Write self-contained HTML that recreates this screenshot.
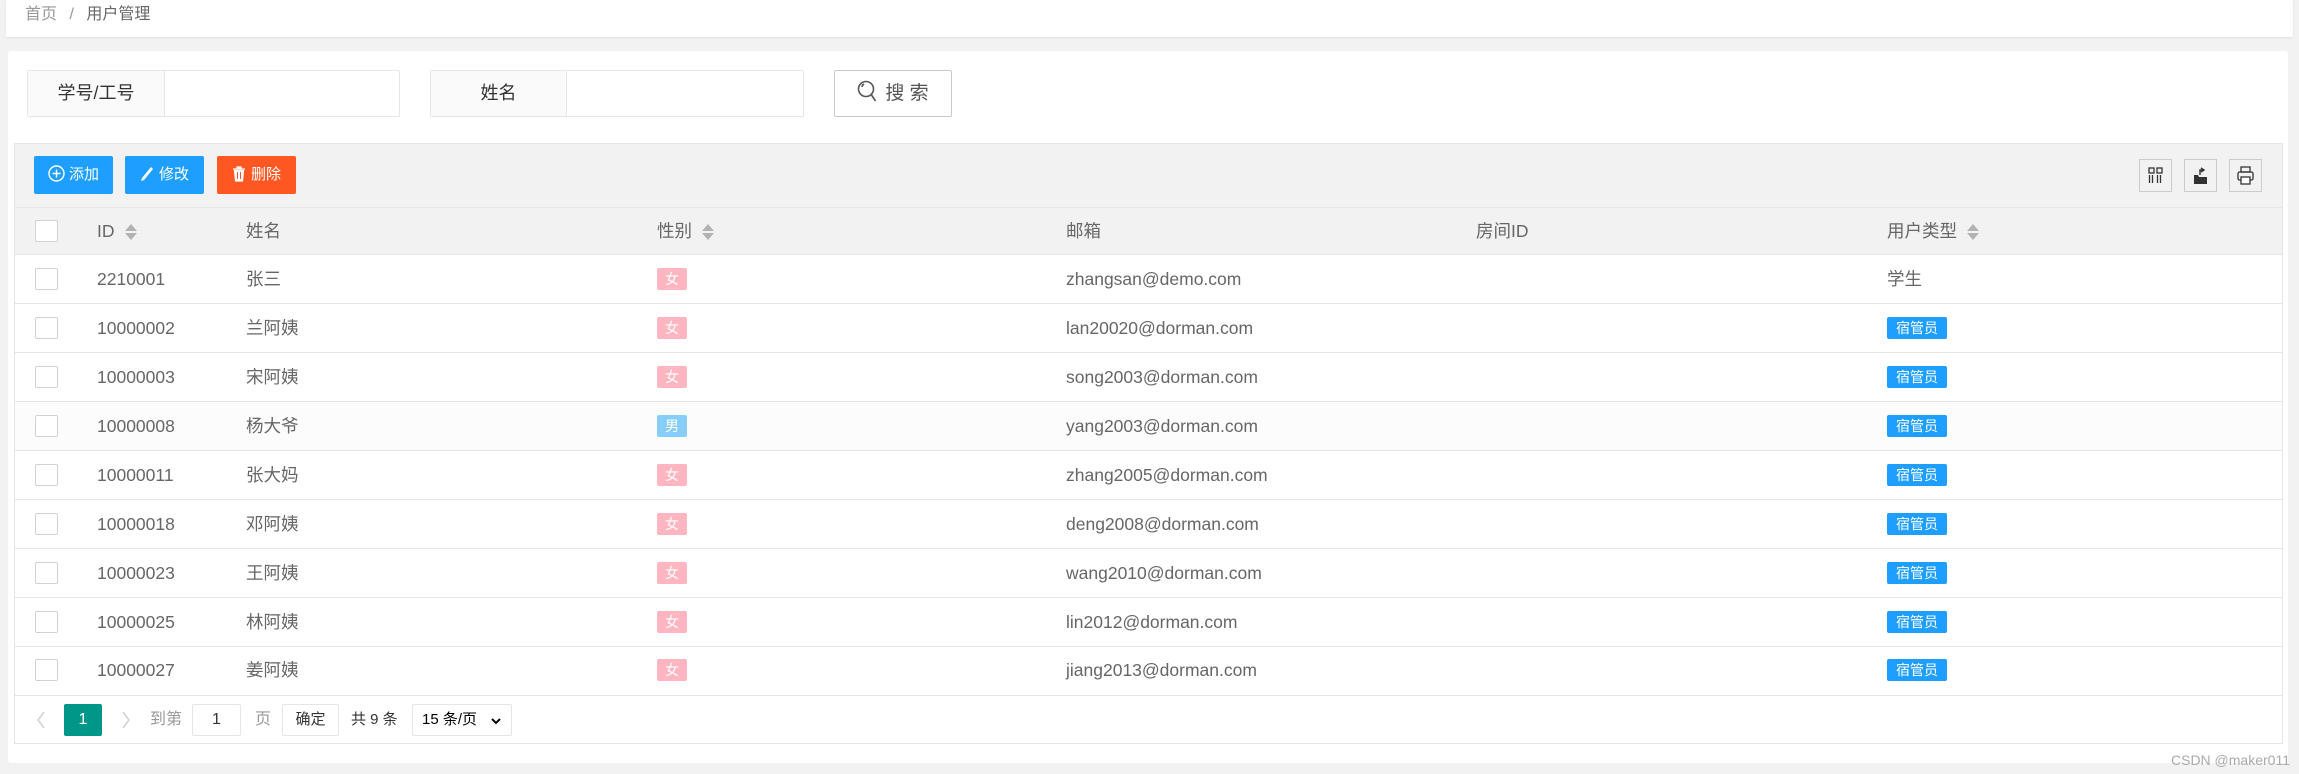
<!DOCTYPE html>
<html><head><meta charset="utf-8"><style>
*{box-sizing:border-box;margin:0;padding:0}
body{width:2299px;height:774px;background:#f2f2f2;font-family:"Liberation Sans","Noto Sans CJK SC",sans-serif;position:relative;overflow:hidden;color:#666}
.a{position:absolute}
.bc{left:6px;top:0;width:2287px;height:37px;background:#fff;box-shadow:0 1px 2px rgba(0,0,0,.08);font-size:16px;line-height:30px;padding-left:19px;color:#999}
.card{left:8px;top:51px;width:2280px;height:712px;background:#fff;border-radius:3px}
.grp{top:70px;height:47px;border:1px solid #e6e6e6;background:#fff;border-radius:2px}
.lbl{position:absolute;left:0;top:0;bottom:0;background:#fafafa;border-right:1px solid #e6e6e6;color:#333;font-size:18px;line-height:45px;text-align:center}
.sbtn{left:834px;top:70px;width:118px;height:47px;border:1px solid #c9c9c9;border-radius:2px;color:#555;font-size:19px;line-height:45px;text-align:center}
.tb{left:14px;top:143px;width:2269px;height:601px;border:1px solid #e6e6e6}
.tool{left:15px;top:144px;width:2267px;height:64px;background:#f2f2f2;border-bottom:1px solid #e6e6e6}
.btn{top:156px;height:38px;width:79px;color:#fff;font-size:15px;line-height:38px;text-align:center;border-radius:2px}
.ic{top:159px;width:33px;height:33px;border:1px solid #ccc;}
.hd{left:15px;top:208px;width:2267px;height:47px;background:#f2f2f2;border-bottom:1px solid #e6e6e6}
.row{left:15px;width:2267px;height:49px;border-bottom:1px solid #e6e6e6}
.t{font-size:17.5px;line-height:22px}
.cb{width:23px;height:22px;border:1px solid #d2d2d2;background:#fff;border-radius:2px}
.bd{width:30px;height:22px;color:#fff;font-size:14px;line-height:22px;text-align:center;border-radius:2px}
.gm{width:60px;height:22px;background:#1e9fff;color:#fff;font-size:14px;line-height:22px;text-align:center;border-radius:2px}
.sort{display:inline-block;vertical-align:middle;margin-left:10px;width:0;height:18px;position:relative}
.sort:before{content:"";position:absolute;top:1px;left:0;border:6px solid transparent;border-bottom:7px solid #b2b2b2;border-top:0}
.sort:after{content:"";position:absolute;top:10px;left:0;border:6px solid transparent;border-top:7px solid #b2b2b2;border-bottom:0}
.pg{font-size:16px;line-height:32px}
</style></head><body>
<div class="a bc">首页 <span style="margin:0 8px">/</span> <span style="color:#666">用户管理</span></div>
<div class="a card"></div>
<div class="a grp" style="left:27px;width:373px"><div class="lbl" style="width:137px">学号/工号</div></div>
<div class="a grp" style="left:430px;width:374px"><div class="lbl" style="width:136px">姓名</div></div>
<div class="a sbtn"><svg width="22" height="24" viewBox="0 0 22 24" style="vertical-align:-5px;margin-right:6px"><circle cx="9" cy="9" r="7.5" fill="none" stroke="#555" stroke-width="1.6"/><path d="M5 7a4 4 0 0 1 2-3M14.5 15l4 6" stroke="#555" stroke-width="1.6" fill="none"/></svg>搜 索</div>
<div class="a tb"></div>
<div class="a tool"></div>
<div class="a btn" style="left:34px;background:#1e9fff"><svg width="17" height="17" viewBox="0 0 17 17" style="vertical-align:-3px;margin-right:4px"><circle cx="8.5" cy="8.5" r="7.5" fill="none" stroke="#fff" stroke-width="1.4"/><path d="M8.5 4.5v8M4.5 8.5h8" stroke="#fff" stroke-width="1.4"/></svg>添加</div>
<div class="a btn" style="left:125px;background:#1e9fff"><svg width="14" height="16" viewBox="0 0 14 16" style="vertical-align:-3px;margin-right:5px"><path d="M11 1l2 2-9 11-3 1 1-3z" fill="#fff"/></svg>修改</div>
<div class="a btn" style="left:217px;background:#ff5722"><svg width="14" height="16" viewBox="0 0 14 16" style="vertical-align:-3px;margin-right:5px"><path d="M1 3h12M5 3V1h4v2M2.5 4.5h9l-1 10.5h-7z" fill="#fff" stroke="#fff" stroke-width="1.2"/><path d="M5.5 6v7M8.5 6v7" stroke="#ff5722" stroke-width="1"/></svg>删除</div>
<div class="a ic" style="left:2139px"><svg width="31" height="31" viewBox="0 0 31 31"><rect x="9" y="8" width="5" height="5" fill="none" stroke="#333" stroke-width="1.3"/><rect x="17" y="8" width="5" height="5" fill="none" stroke="#333" stroke-width="1.3"/><path d="M9.5 15v8M12.5 15v8M17.5 15v8M20.5 15v8" stroke="#333" stroke-width="1.3"/></svg></div>
<div class="a ic" style="left:2184px"><svg width="31" height="31" viewBox="0 0 31 31"><path d="M9 15h4l1 2h8v7H9z" fill="#333"/><path d="M15 15v-5h3M16 8l3 2-3 2" stroke="#333" stroke-width="1.4" fill="none"/></svg></div>
<div class="a ic" style="left:2229px"><svg width="31" height="31" viewBox="0 0 31 31"><rect x="11" y="7" width="9" height="5" fill="none" stroke="#333" stroke-width="1.3"/><rect x="8" y="12" width="15" height="8" rx="1.5" fill="none" stroke="#333" stroke-width="1.3"/><rect x="11" y="17" width="9" height="7" fill="#fff" stroke="#333" stroke-width="1.3"/></svg></div>
<div class="a hd"></div>
<div class="a cb" style="left:35px;top:220px"></div>
<div class="a t" style="left:97px;top:220px">ID<span class="sort"></span></div>
<div class="a t" style="left:246px;top:220px">姓名</div>
<div class="a t" style="left:657px;top:220px">性别<span class="sort"></span></div>
<div class="a t" style="left:1066px;top:220px">邮箱</div>
<div class="a t" style="left:1476px;top:220px">房间ID</div>
<div class="a t" style="left:1887px;top:220px">用户类型<span class="sort"></span></div>

<div class="a row" style="top:255px"></div>
<div class="a row" style="top:304px"></div>
<div class="a row" style="top:353px"></div>
<div class="a row" style="top:402px;background:#fcfcfc"></div>
<div class="a row" style="top:451px"></div>
<div class="a row" style="top:500px"></div>
<div class="a row" style="top:549px"></div>
<div class="a row" style="top:598px"></div>
<div class="a row" style="top:647px"></div>

<div class="a cb" style="left:35px;top:268px"></div><div class="a t" style="left:97px;top:268px">2210001</div><div class="a t" style="left:246px;top:268px">张三</div><div class="a bd" style="left:657px;top:268px;background:#ffb6c1">女</div><div class="a t" style="left:1066px;top:268px">zhangsan@demo.com</div><div class="a t" style="left:1887px;top:268px">学生</div>
<div class="a cb" style="left:35px;top:317px"></div><div class="a t" style="left:97px;top:317px">10000002</div><div class="a t" style="left:246px;top:317px">兰阿姨</div><div class="a bd" style="left:657px;top:317px;background:#ffb6c1">女</div><div class="a t" style="left:1066px;top:317px">lan20020@dorman.com</div><div class="a gm" style="left:1887px;top:317px">宿管员</div>
<div class="a cb" style="left:35px;top:366px"></div><div class="a t" style="left:97px;top:366px">10000003</div><div class="a t" style="left:246px;top:366px">宋阿姨</div><div class="a bd" style="left:657px;top:366px;background:#ffb6c1">女</div><div class="a t" style="left:1066px;top:366px">song2003@dorman.com</div><div class="a gm" style="left:1887px;top:366px">宿管员</div>
<div class="a cb" style="left:35px;top:415px"></div><div class="a t" style="left:97px;top:415px">10000008</div><div class="a t" style="left:246px;top:415px">杨大爷</div><div class="a bd" style="left:657px;top:415px;background:#87cefa">男</div><div class="a t" style="left:1066px;top:415px">yang2003@dorman.com</div><div class="a gm" style="left:1887px;top:415px">宿管员</div>
<div class="a cb" style="left:35px;top:464px"></div><div class="a t" style="left:97px;top:464px">10000011</div><div class="a t" style="left:246px;top:464px">张大妈</div><div class="a bd" style="left:657px;top:464px;background:#ffb6c1">女</div><div class="a t" style="left:1066px;top:464px">zhang2005@dorman.com</div><div class="a gm" style="left:1887px;top:464px">宿管员</div>
<div class="a cb" style="left:35px;top:513px"></div><div class="a t" style="left:97px;top:513px">10000018</div><div class="a t" style="left:246px;top:513px">邓阿姨</div><div class="a bd" style="left:657px;top:513px;background:#ffb6c1">女</div><div class="a t" style="left:1066px;top:513px">deng2008@dorman.com</div><div class="a gm" style="left:1887px;top:513px">宿管员</div>
<div class="a cb" style="left:35px;top:562px"></div><div class="a t" style="left:97px;top:562px">10000023</div><div class="a t" style="left:246px;top:562px">王阿姨</div><div class="a bd" style="left:657px;top:562px;background:#ffb6c1">女</div><div class="a t" style="left:1066px;top:562px">wang2010@dorman.com</div><div class="a gm" style="left:1887px;top:562px">宿管员</div>
<div class="a cb" style="left:35px;top:611px"></div><div class="a t" style="left:97px;top:611px">10000025</div><div class="a t" style="left:246px;top:611px">林阿姨</div><div class="a bd" style="left:657px;top:611px;background:#ffb6c1">女</div><div class="a t" style="left:1066px;top:611px">lin2012@dorman.com</div><div class="a gm" style="left:1887px;top:611px">宿管员</div>
<div class="a cb" style="left:35px;top:659px"></div><div class="a t" style="left:97px;top:659px">10000027</div><div class="a t" style="left:246px;top:659px">姜阿姨</div><div class="a bd" style="left:657px;top:659px;background:#ffb6c1">女</div><div class="a t" style="left:1066px;top:659px">jiang2013@dorman.com</div><div class="a gm" style="left:1887px;top:659px">宿管员</div>

<div class="a" style="left:36px;top:710px"><svg width="10" height="20" viewBox="0 0 10 20"><path d="M8 2L2 10l6 8" stroke="#d2d2d2" stroke-width="1.5" fill="none"/></svg></div>
<div class="a pg" style="left:64px;top:704px;width:38px;height:32px;background:#009688;color:#fff;text-align:center;border-radius:2px">1</div>
<div class="a" style="left:121px;top:710px"><svg width="10" height="20" viewBox="0 0 10 20"><path d="M2 2l6 8-6 8" stroke="#d2d2d2" stroke-width="1.5" fill="none"/></svg></div>
<div class="a pg" style="left:150px;top:704px;color:#999">到第</div>
<div class="a pg" style="left:192px;top:704px;width:49px;height:32px;border:1px solid #e6e6e6;color:#333;text-align:center;line-height:30px;border-radius:2px">1</div>
<div class="a pg" style="left:255px;top:704px;color:#999">页</div>
<div class="a pg" style="left:282px;top:704px;width:57px;height:32px;border:1px solid #e6e6e6;color:#333;text-align:center;line-height:30px;border-radius:2px;font-size:15px">确定</div>
<div class="a pg" style="left:351px;top:704px;color:#333;font-size:15px">共 9 条</div>
<div class="a pg" style="left:412px;top:704px;width:100px;height:32px;border:1px solid #e6e6e6;color:#000;line-height:30px;padding-left:9px;border-radius:2px;font-size:15px">15 条/页<svg width="12" height="10" viewBox="0 0 12 10" style="position:absolute;right:9px;top:11px"><path d="M2 3l4 4 4-4" stroke="#000" stroke-width="2" fill="none"/></svg></div>
<div class="a" style="left:2171px;top:752px;font-size:14px;color:#aaa">CSDN @maker011</div>
</body></html>
